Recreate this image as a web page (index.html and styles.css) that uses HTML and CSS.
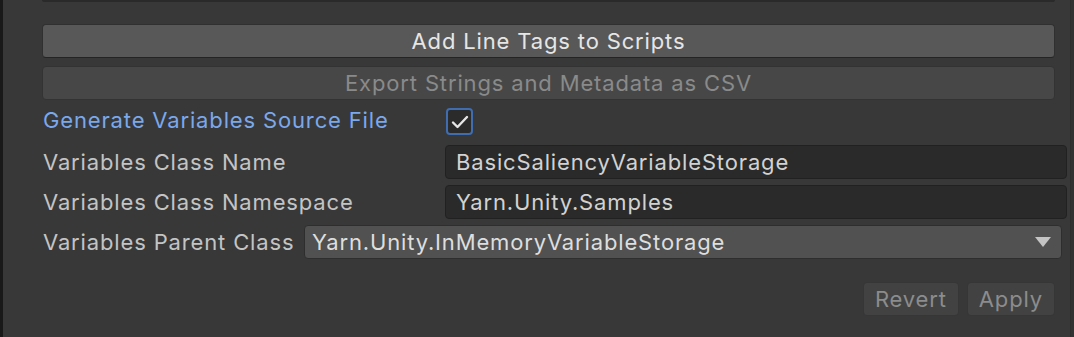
FILE: index.html
```html
<!DOCTYPE html>
<html lang="en">
<head>
    <meta charset="UTF-8">
    <title>Yarn Project Inspector</title>
    <link rel="stylesheet" href="styles.css">
</head>
<body>
<div class="inspector">
    <div class="pane">
        <div class="top-field"></div>
        <div class="btn-wide">Add Line Tags to Scripts</div>
        <div class="btn-wide disabled">Export Strings and Metadata as CSV</div>

        <div class="row check-row">
            <span class="label blue">Generate Variables Source File</span>
            <span class="checkbox">
                <svg width="18" height="14" viewBox="0 0 18 14"><path d="M2 7.5 L6.5 12 L16 2" fill="none" stroke="#e6e6e6" stroke-width="2.4" stroke-linecap="round" stroke-linejoin="round"/></svg>
            </span>
        </div>
        <div class="row">
            <span class="label">Variables Class Name</span>
            <span class="text-field">BasicSaliencyVariableStorage</span>
        </div>
        <div class="row">
            <span class="label">Variables Class Namespace</span>
            <span class="text-field">Yarn.Unity.Samples</span>
        </div>
        <div class="row">
            <span class="label short">Variables Parent Class</span>
            <span class="dropdown">Yarn.Unity.InMemoryVariableStorage
                <svg class="arrow" width="16" height="10" viewBox="0 0 16 10"><path d="M0 0 H16 L8 10 Z" fill="#c4c4c4"/></svg>
            </span>
        </div>

        <div class="footer">
            <span class="btn-small">Revert</span>
            <span class="btn-small">Apply</span>
        </div>
    </div>
    <div class="edge"></div>
</div>
</body>
</html>
```

FILE: styles.css
```css
*{
    margin: 0px;
    padding: 0px;
    box-sizing: border-box;
}
body
{
    background: #383838;
    font-family: Inter, "Noto Sans", sans-serif;
    font-size: 22px;
    letter-spacing: 0.85px;
    color: #c4c4c4;
    width: 1074px;
    height: 337px;
    overflow: hidden;
}
.inspector
{
    display: flex;
    height: 337px;
    border-left: 3px solid #191919;
}
.pane
{
    flex: 1;
    padding-left: 39px;
    padding-right: 3px;
}
.edge
{
    width: 4px;
    background: #323232;
    border-left: 1px solid #2e2e2e;
}
.top-field
{
    height: 2px;
    width: 1013px;
    background: #2a2a2a;
    border-radius: 0 0 3px 3px;
    margin-bottom: 22px;
}
.btn-wide
{
    width: 1013px;
    height: 34px;
    background: #585858;
    border: 1px solid #303030;
    border-bottom-color: #242424;
    border-radius: 4px;
    color: #e6e6e6;
    text-align: center;
    line-height: 32px;
    margin-bottom: 8px;
}
.btn-wide.disabled
{
    background: #474747;
    border-color: #333333;
    color: #8a8a8a;
}
.row
{
    display: flex;
    align-items: center;
    height: 34px;
    margin-bottom: 6px;
}
.check-row
{
    height: 27px;
    margin-bottom: 10px;
}
.check-row .label
{
    padding-bottom: 3px;
}
.label
{
    width: 403px;
    padding-left: 1px;
    white-space: nowrap;
}
.label.short
{
    width: 262px;
}
.blue
{
    color: #7ba8ec;
}
.checkbox
{
    width: 27px;
    height: 27px;
    margin-left: 1px;
    border: 2px solid #3f6db0;
    border-radius: 4px;
    background: #2b2b2b;
    display: flex;
    align-items: center;
    justify-content: center;
}
.text-field
{
    flex: 1;
    height: 34px;
    background: #2a2a2a;
    border: 1px solid #212121;
    border-radius: 4px;
    color: #d2d2d2;
    padding-left: 10px;
    line-height: 32px;
}
.dropdown
{
    width: 758px;
    height: 34px;
    background: #515151;
    border: 1px solid #2e2e2e;
    border-radius: 4px;
    color: #dedede;
    padding-left: 7px;
    line-height: 32px;
    display: flex;
    justify-content: space-between;
    align-items: center;
}
.arrow
{
    margin-right: 10px;
}
.footer
{
    display: flex;
    justify-content: flex-end;
    gap: 8px;
    width: 1013px;
    margin-top: 23px;
}
.btn-small
{
    height: 34px;
    background: #424242;
    border: 1px solid #363636;
    border-radius: 4px;
    color: #8c8c8c;
    line-height: 32px;
    padding: 0 11px;
}
```
